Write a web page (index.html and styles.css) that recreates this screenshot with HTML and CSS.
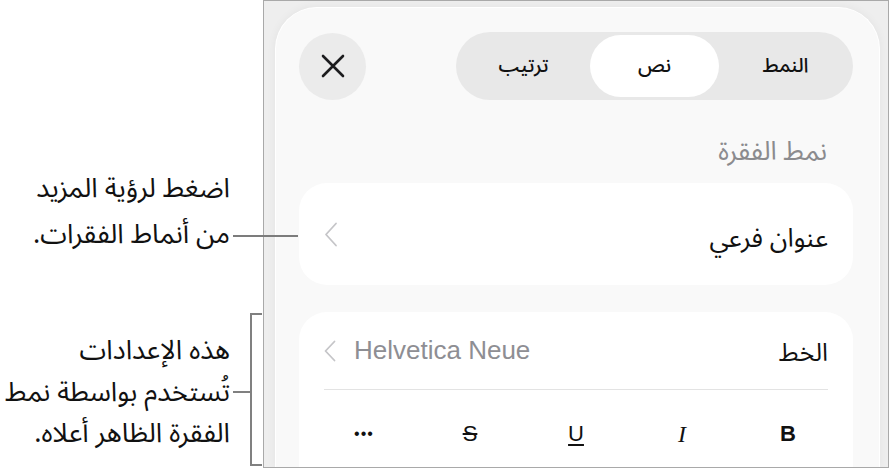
FILE: index.html
```html
<!DOCTYPE html>
<html lang="ar">
<head>
    <meta charset="UTF-8">
    <title>نمط الفقرة</title>
    <link rel="stylesheet" href="styles.css">
</head>
<body>
<div class="page">
    <div class="notes">
        <div class="note note-more">
            <p>
                <span class="line">اضغط لرؤية المزيد</span>
                <span class="line">من أنماط الفقرات.</span>
            </p>
            <span class="leader"></span>
        </div>
        <div class="note note-font">
            <p>
                <span class="line">هذه الإعدادات</span>
                <span class="line">تُستخدم بواسطة نمط</span>
                <span class="line">الفقرة الظاهر أعلاه.</span>
            </p>
            <span class="bracket"></span>
            <span class="leader"></span>
        </div>
    </div>

    <div class="frame">
        <div class="panel" dir="rtl">
            <div class="panel-head">
                <div class="segments">
                    <span>النمط</span>
                    <span class="select">نص</span>
                    <span>ترتيب</span>
                </div>
                <span class="close">
                    <svg width="24" height="24" viewBox="0 0 24 24"><path d="M2 2L22 22M22 2L2 22"/></svg>
                </span>
            </div>

            <h2 class="title">نمط الفقرة</h2>

            <div class="card style-row">
                <span class="style-name">عنوان فرعي</span>
                <svg class="chevron" width="14" height="25" viewBox="0 0 14 25"><path d="M12 1.5L2 12.5L12 23.5"/></svg>
            </div>

            <div class="card font-card">
                <div class="font-row">
                    <span class="font-label">الخط</span>
                    <span class="font-value" dir="ltr">
                        <svg class="chevron small" width="12" height="22" viewBox="0 0 12 22"><path d="M10.5 1.5L1.5 11L10.5 20.5"/></svg>
                        Helvetica Neue
                    </span>
                </div>
                <div class="format-row">
                    <span class="fmt fmt-b">B</span>
                    <span class="fmt fmt-i">I</span>
                    <span class="fmt fmt-u">U</span>
                    <span class="fmt fmt-s">S</span>
                    <span class="fmt fmt-more">&bull;&bull;&bull;</span>
                </div>
            </div>
        </div>
    </div>
</div>
</body>
</html>
```

FILE: styles.css
```css
* {
    margin: 0;
    padding: 0;
    box-sizing: border-box;
}

body {
    background: #fff;
    font-family: "Noto Sans Arabic", "Noto Sans", "DejaVu Sans", sans-serif;
    color: #111;
}

.page {
    display: flex;
    width: 891px;
    height: 471px;
}

/* 左侧说明文字 */
.notes {
    width: 263px;
    flex: none;
    position: relative;
}

.note {
    position: relative;
}

.note p {
    direction: rtl;
    text-align: right;
    width: 230px;
    font-size: 27px;
    color: #111;
}

.note .line {
    display: block;
    white-space: nowrap;
}

.note-more {
    margin-top: 166px;
}

.note-more .line {
    line-height: 46px;
}

.note-more .leader {
    position: absolute;
    left: 233px;
    top: 69px;
    width: 65px;
    height: 2px;
    background: #7c7c7c;
}

.note-font {
    margin-top: 72px;
}

.note-font .line {
    line-height: 41.5px;
}

.note-font .bracket {
    position: absolute;
    left: 250px;
    top: -17px;
    width: 12px;
    height: 153px;
    border: 2px solid #808080;
    border-right: none;
}

.note-font .leader {
    position: absolute;
    left: 233px;
    top: 61px;
    width: 18px;
    height: 2px;
    background: #808080;
}

/* 右侧界面截图 */
.frame {
    width: 626px;
    height: 468px;
    flex: none;
    border: 1px solid #a9a9a9;
    background: #eeeeee;
    padding: 6px 8px 0 11px;
    overflow: hidden;
}

.panel {
    height: 100%;
    background: #f9f9f9;
    border: 1.5px solid #fff;
    border-bottom: none;
    border-radius: 42px 42px 0 0;
    box-shadow: 0 0 10px rgba(0, 0, 0, 0.05);
    padding: 24px 26px 0 23px;
}

.panel-head {
    display: flex;
    justify-content: space-between;
    align-items: center;
    height: 68px;
}

.segments {
    display: grid;
    grid-template-columns: repeat(3, 1fr);
    gap: 2px;
    width: 397px;
    height: 68px;
    padding: 3px;
    background: #e8e8e8;
    border-radius: 34px;
}

.segments span {
    display: flex;
    align-items: center;
    justify-content: center;
    font-size: 20px;
    font-weight: 500;
    border-radius: 31px;
}

.segments span.select {
    background: #fff;
}

.close {
    display: flex;
    align-items: center;
    justify-content: center;
    width: 67px;
    height: 67px;
    border-radius: 50%;
    background: #ebebeb;
}

.close svg {
    stroke: #1c1c1e;
    stroke-width: 2.6;
    stroke-linecap: round;
    fill: none;
}

.title {
    margin-top: 38px;
    padding-right: 26px;
    font-size: 26px;
    font-weight: 400;
    line-height: 28px;
    color: #8b8b8e;
}

.card {
    background: #fff;
    border-radius: 28px;
}

.chevron {
    fill: none;
    stroke: #c5c5c8;
    stroke-width: 1.8;
    stroke-linecap: round;
    stroke-linejoin: round;
}

.style-row {
    display: flex;
    justify-content: space-between;
    align-items: center;
    height: 102px;
    margin-top: 17px;
    padding: 0 25px 0 25px;
}

.style-name {
    font-size: 26px;
    padding-top: 8px;
}

.font-card {
    margin-top: 27px;
    height: 200px;
    padding: 0 12px;
}

.font-row {
    display: flex;
    justify-content: space-between;
    align-items: center;
    height: 78px;
    margin: 0 13px;
    border-bottom: 1.5px solid #e3e3e3;
}

.font-label {
    font-size: 25px;
    padding-top: 4px;
}

.font-value {
    display: flex;
    align-items: center;
    gap: 18px;
    font-family: "Liberation Sans", Arial, sans-serif;
    font-size: 26px;
    color: #8e8e93;
}

.format-row {
    display: grid;
    grid-template-columns: repeat(5, 1fr);
    height: 88px;
    align-items: center;
    justify-items: center;
    font-family: "Liberation Sans", Arial, sans-serif;
    font-size: 22px;
    color: #111;
}

.fmt-b {
    font-weight: 700;
}

.fmt-i {
    font-family: "Liberation Serif", serif;
    font-style: italic;
    font-size: 24px;
}

.fmt-u {
    text-decoration: underline;
    text-underline-offset: 3px;
    text-decoration-thickness: 1.5px;
}

.fmt-s {
    text-decoration: line-through;
    text-decoration-thickness: 1.5px;
}

.fmt-more {
    font-size: 16px;
    letter-spacing: 1px;
}
```
